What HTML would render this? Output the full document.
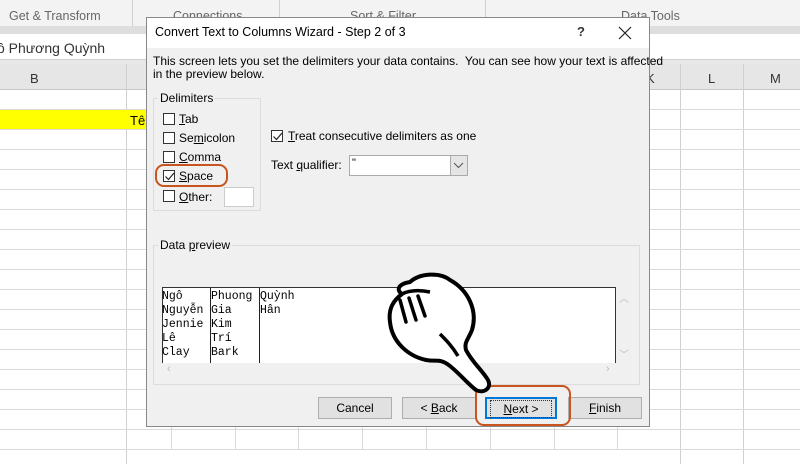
<!DOCTYPE html>
<html><head><meta charset="utf-8"><style>
*{margin:0;padding:0;box-sizing:border-box}
body{width:800px;height:450px;overflow:hidden;background:#fff;font-family:"Liberation Sans",sans-serif;position:relative;font-size:12px;color:#000}
.a{position:absolute}
.vl{position:absolute;width:1px;background:#dadada}
.hl{position:absolute;height:1px;background:#dadada}
.cb{position:absolute;width:12px;height:12px;border:1px solid #333;background:#fff}
.btn{position:absolute;height:22px;border:1px solid #adadad;background:#e1e1e1;text-align:center;line-height:20px;font-size:12px}
u{text-decoration:underline}
.mono{font-family:"Liberation Mono",monospace;font-size:11.5px;line-height:14px}
.t{font-size:12px}
</style></head><body>
<div class="a" style="left:0;top:0;width:800px;height:27px;background:#f3f3f3"></div>
<div class="a" style="left:0;top:26px;width:800px;height:8px;background:#dedede"></div>
<div class="a" style="left:9px;top:9px;color:#666;font-size:12.5px">Get &amp; Transform</div>
<div class="a" style="left:173px;top:9px;color:#666;font-size:12.5px">Connections</div>
<div class="a" style="left:350px;top:9px;color:#666;font-size:12.5px">Sort &amp; Filter</div>
<div class="a" style="left:621px;top:9px;color:#666;font-size:12.5px">Data Tools</div>
<div class="vl" style="left:132px;top:0;height:26px;background:#d0d0d0"></div>
<div class="vl" style="left:279px;top:0;height:26px;background:#d0d0d0"></div>
<div class="vl" style="left:485px;top:0;height:26px;background:#d0d0d0"></div>
<div class="a" style="left:0;top:35px;width:800px;height:25px;background:#fff;border-bottom:1px solid #d0d0d0"></div>
<div class="a" style="left:-3px;top:40px;font-size:14px;color:#333">ô Phương Quỳnh</div>
<div class="a" style="left:0;top:60px;width:800px;height:4px;background:#e8e8e8"></div>
<div class="a" style="left:0;top:64px;width:800px;height:26px;background:#e6e6e6;border-bottom:1px solid #c8c8c8"></div>
<div class="a" style="left:30px;top:71px;font-size:13px;color:#333">B</div>
<div class="a" style="left:646px;top:71px;font-size:13px;color:#333">K</div>
<div class="a" style="left:708px;top:71px;font-size:13px;color:#333">L</div>
<div class="a" style="left:770px;top:71px;font-size:13px;color:#333">M</div>
<div class="vl" style="left:126px;top:64px;height:400px;background:#d0d0d0"></div>
<div class="vl" style="left:680px;top:64px;height:400px;background:#d0d0d0"></div>
<div class="vl" style="left:743px;top:64px;height:400px;background:#d0d0d0"></div>
<div class="vl" style="left:171px;top:420px;height:30px"></div>
<div class="vl" style="left:235px;top:420px;height:30px"></div>
<div class="vl" style="left:298px;top:420px;height:30px"></div>
<div class="vl" style="left:362px;top:420px;height:30px"></div>
<div class="vl" style="left:426px;top:420px;height:30px"></div>
<div class="vl" style="left:490px;top:420px;height:30px"></div>
<div class="vl" style="left:554px;top:420px;height:30px"></div>
<div class="vl" style="left:617px;top:420px;height:30px"></div>
<div class="a" style="left:0;top:110px;width:150px;height:20px;background:#ffff00"></div>
<div class="a" style="left:130px;top:113px;font-size:13px">Tê</div>
<div class="hl" style="left:0;top:109px;width:800px"></div>
<div class="hl" style="left:0;top:129px;width:800px"></div>
<div class="hl" style="left:0;top:149px;width:800px"></div>
<div class="hl" style="left:0;top:169px;width:800px"></div>
<div class="hl" style="left:0;top:189px;width:800px"></div>
<div class="hl" style="left:0;top:209px;width:800px"></div>
<div class="hl" style="left:0;top:229px;width:800px"></div>
<div class="hl" style="left:0;top:249px;width:800px"></div>
<div class="hl" style="left:0;top:269px;width:800px"></div>
<div class="hl" style="left:0;top:289px;width:800px"></div>
<div class="hl" style="left:0;top:309px;width:800px"></div>
<div class="hl" style="left:0;top:329px;width:800px"></div>
<div class="hl" style="left:0;top:349px;width:800px"></div>
<div class="hl" style="left:0;top:369px;width:800px"></div>
<div class="hl" style="left:0;top:389px;width:800px"></div>
<div class="hl" style="left:0;top:409px;width:800px"></div>
<div class="hl" style="left:0;top:429px;width:800px"></div>
<div class="hl" style="left:0;top:449px;width:800px"></div>
<div class="a" style="left:146px;top:17px;width:504px;height:410px;background:#f0f0f0;border:1px solid #888"></div>
<div class="a" style="left:147px;top:18px;width:502px;height:30px;background:#fff"></div>
<div class="a" style="left:155px;top:25px;font-size:12.5px">Convert Text to Columns Wizard - Step 2 of 3</div>
<div class="a" style="left:577px;top:24px;font-size:13px;font-weight:bold;color:#333">?</div>
<svg class="a" style="left:618px;top:26px" width="14" height="14"><path d="M1 1L13 13M13 1L1 13" stroke="#222" stroke-width="1.2"/></svg>
<div class="a" style="left:153px;top:55px;font-size:12px;line-height:13px">This screen lets you set the delimiters your data contains.&nbsp; You can see how your text is affected<br>in the preview below.</div>
<div class="a" style="left:153px;top:98px;width:108px;height:113px;border:1px solid #dcdcdc"></div>
<div class="a t" style="left:158px;top:91px;background:#f0f0f0;padding:0 2px">Delimiters</div>
<div class="cb" style="left:163px;top:113px"></div><div class="a t" style="left:179px;top:112px"><u>T</u>ab</div>
<div class="cb" style="left:163px;top:132px"></div><div class="a t" style="left:179px;top:131px">Se<u>m</u>icolon</div>
<div class="cb" style="left:163px;top:151px"></div><div class="a t" style="left:179px;top:150px"><u>C</u>omma</div>
<div class="cb" style="left:163px;top:170px"></div><svg class="a" style="left:164px;top:171px" width="11" height="11"><path d="M1.5 5.5L4.5 8.5L10 2" stroke="#222" stroke-width="1.2" fill="none"/></svg>
<div class="a t" style="left:179px;top:169px"><u>S</u>pace</div>
<div class="cb" style="left:163px;top:190px"></div><div class="a t" style="left:179px;top:190px"><u>O</u>ther:</div>
<div class="a" style="left:224px;top:187px;width:30px;height:20px;background:#fff;border:1px solid #ccc"></div>
<div class="a" style="left:155px;top:164px;width:73px;height:23px;border:2px solid #c8541e;border-radius:9px"></div>
<div class="cb" style="left:271px;top:130px"></div><svg class="a" style="left:272px;top:131px" width="11" height="11"><path d="M1.5 5.5L4.5 8.5L10 2" stroke="#222" stroke-width="1.2" fill="none"/></svg>
<div class="a t" style="left:288px;top:129px"><u>T</u>reat consecutive delimiters as one</div>
<div class="a t" style="left:271px;top:158px">Text <u>q</u>ualifier:</div>
<div class="a" style="left:349px;top:155px;width:119px;height:21px;background:#fff;border:1px solid #aaa"></div>
<div class="a" style="left:352px;top:157px;font-size:11px">"</div>
<div class="a" style="left:450px;top:156px;width:17px;height:19px;background:#e5e5e5;border-left:1px solid #aaa"></div>
<svg class="a" style="left:453px;top:162px" width="11" height="7"><path d="M1 1L5.5 5.5L10 1" stroke="#555" fill="none"/></svg>
<div class="a" style="left:153px;top:245px;width:487px;height:140px;border:1px solid #dcdcdc"></div>
<div class="a t" style="left:158px;top:238px;background:#f0f0f0;padding:0 2px">Data <u>p</u>review</div>
<div class="a" style="left:162px;top:287px;width:454px;height:76px;background:#fff;border:1px solid #333;border-bottom:none;overflow:hidden"></div>
<div class="a" style="left:210px;top:288px;width:1px;height:75px;background:#222"></div>
<div class="a" style="left:259px;top:288px;width:1px;height:75px;background:#222"></div>
<div class="a mono" style="left:162px;top:290px">Ngô<br>Nguyễn<br>Jennie<br>Lê<br>Clay</div>
<div class="a mono" style="left:211px;top:290px">Phuong<br>Gia<br>Kim<br>Trí<br>Bark</div>
<div class="a mono" style="left:260px;top:290px">Quỳnh<br>Hân</div>
<div class="a" style="left:162px;top:363px;width:454px;height:14px;background:#f0f0f0"></div>
<div class="a" style="left:167px;top:363px;color:#bbb;font-size:11px">‹</div>
<div class="a" style="left:606px;top:363px;color:#bbb;font-size:11px">›</div>
<div class="a" style="left:619px;top:290px;color:#bbb;font-size:10px">︿</div>
<div class="a" style="left:619px;top:346px;color:#bbb;font-size:10px">﹀</div>
<div class="btn" style="left:318px;top:397px;width:74px">Cancel</div>
<div class="btn" style="left:402px;top:397px;width:74px">&lt; <u>B</u>ack</div>
<div class="btn" style="left:485px;top:397px;width:72px;border:2px solid #0078d7"><span style="border:1px dotted #333;padding:1px 12px"><u>N</u>ext &gt;</span></div>
<div class="btn" style="left:568px;top:397px;width:74px"><u>F</u>inish</div>
<div class="a" style="left:475px;top:385px;width:96px;height:41px;border:2px solid #c8541e;border-radius:9px"></div>
<svg class="a" style="left:380px;top:270px" width="120" height="130" viewBox="0 0 120 130">
<path d="M30 12 C40 3 60 2 70 10 C88 20 98 40 92 60 C88 70 84 72 86 80 C92 92 102 100 108 110 C112 118 104 124 96 120 C88 114 80 104 70 96 C60 88 56 92 46 90 C28 86 12 72 10 52 C8 38 14 30 22 24 C16 20 18 14 30 12Z" fill="#fff" stroke="#000" stroke-width="4" stroke-linejoin="round"/>
<path d="M22 24 C30 20 40 20 50 22" stroke="#000" stroke-width="3.5" fill="none"/>
<path d="M20 30 L26 52 M29 28 L36 50 M38 26 L45 46" stroke="#000" stroke-width="3.5" stroke-linecap="round"/>
<path d="M60 64 C66 70 72 76 78 86" stroke="#000" stroke-width="3.5" fill="none"/>
</svg>
</body></html>
